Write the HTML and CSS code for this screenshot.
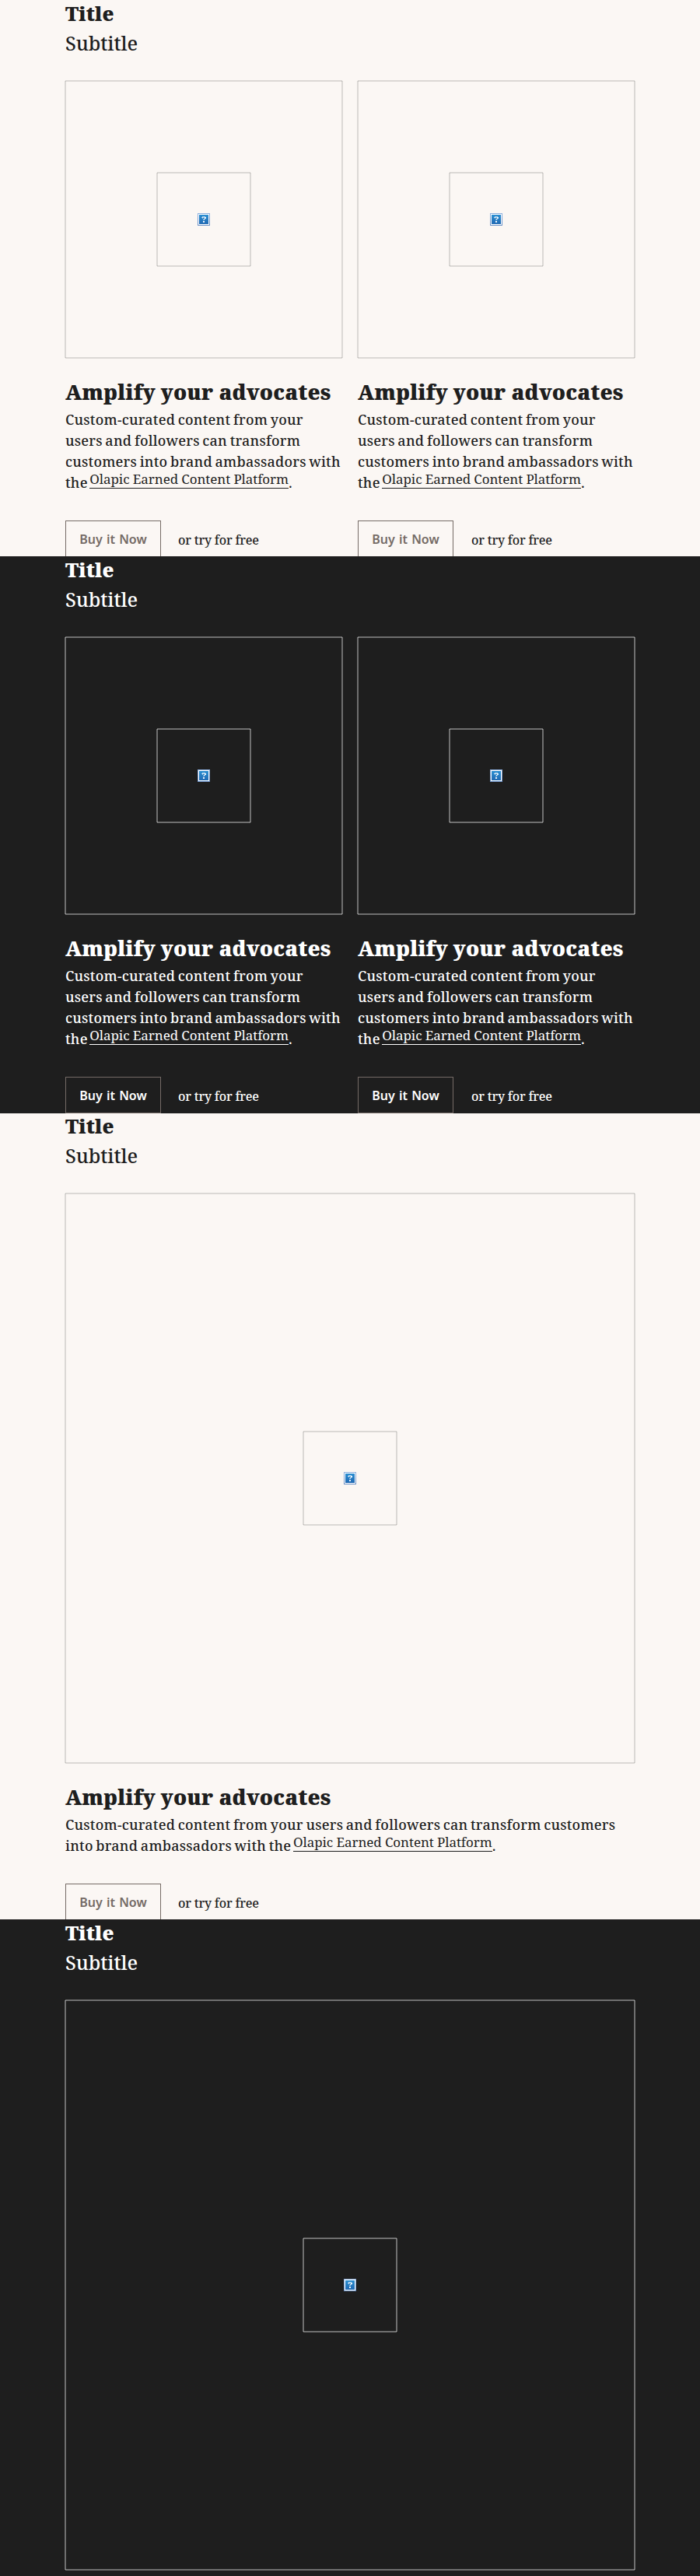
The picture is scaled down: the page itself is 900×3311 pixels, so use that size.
FILE: index.html
```html
<!DOCTYPE html>
<html lang="en">
<head>
<meta charset="utf-8">
<title>Cards</title>
<link rel="stylesheet" href="styles.css">
</head>
<body>
<svg class="defs" width="0" height="0" aria-hidden="true">
  <defs>
    <linearGradient id="edge" x1="0" y1="0" x2="0" y2="1"><stop offset="0" stop-color="#8fb1df"/><stop offset="1" stop-color="#668dc3"/></linearGradient>
    <linearGradient id="fill" x1="0" y1="0" x2="0" y2="1"><stop offset="0" stop-color="#2b8fd2"/><stop offset="1" stop-color="#2069b3"/></linearGradient>
    <symbol id="missing" viewBox="0 0 16 16">
      <rect width="16" height="16" fill="url(#edge)"/>
      <rect x="1" y="1" width="14" height="14" fill="#fff"/>
      <rect x="2" y="2" width="12" height="12" fill="url(#fill)"/>
      <g fill="#fff" stroke="none" shape-rendering="crispEdges">
        <path opacity=".6" d="M6 4h4v1H6zM5 5h1v1H5zM7 5h2v1H7zM6 6h1v1H6zM9 7h1v1H9zM7 8h2v1H7z"/>
        <path opacity=".9" d="M6 5h1v1H6zM9 5h2v2H9zM8 7h1v1H8zM7 10h2v2H7z"/>
      </g>
    </symbol>
  </defs>
</svg>

<section class="section light">
  <div class="container">
    <h2 class="title">Title</h2>
    <p class="subtitle">Subtitle</p>
    <div class="cards">
      <article class="card">
        <div class="media">
          <svg class="frame" viewBox="0 0 356 356"><path d="M0 0H356"/><path d="M0 356H356"/><path d="M0 0V356"/><path d="M356 0V356"/></svg>
          <div class="slot"><svg class="frame" viewBox="0 0 120 120"><path d="M0 0H120"/><path d="M0 120H120"/><path d="M0 0V120"/><path d="M120 0V120"/></svg><svg class="icon"><use href="#missing"/></svg></div>
        </div>
        <h3 class="heading">Amplify your advocates</h3>
        <p class="text">Custom-curated content from your users&nbsp;and followers can transform customers into brand ambassadors with the <a class="link">Olapic Earned Content Platform</a>.</p>
        <div class="actions"><a class="button">Buy it Now</a><span class="note">or try for free</span></div>
      </article>
      <article class="card">
        <div class="media">
          <svg class="frame" viewBox="0 0 356 356"><path d="M0 0H356"/><path d="M0 356H356"/><path d="M0 0V356"/><path d="M356 0V356"/></svg>
          <div class="slot"><svg class="frame" viewBox="0 0 120 120"><path d="M0 0H120"/><path d="M0 120H120"/><path d="M0 0V120"/><path d="M120 0V120"/></svg><svg class="icon"><use href="#missing"/></svg></div>
        </div>
        <h3 class="heading">Amplify your advocates</h3>
        <p class="text">Custom-curated content from your users&nbsp;and followers can transform customers into brand ambassadors with the <a class="link">Olapic Earned Content Platform</a>.</p>
        <div class="actions"><a class="button">Buy it Now</a><span class="note">or try for free</span></div>
      </article>
    </div>
  </div>
</section>

<section class="section dark">
  <div class="container">
    <h2 class="title">Title</h2>
    <p class="subtitle">Subtitle</p>
    <div class="cards">
      <article class="card">
        <div class="media">
          <svg class="frame" viewBox="0 0 356 356"><path d="M0 0H356"/><path d="M0 356H356"/><path d="M0 0V356"/><path d="M356 0V356"/></svg>
          <div class="slot"><svg class="frame" viewBox="0 0 120 120"><path d="M0 0H120"/><path d="M0 120H120"/><path d="M0 0V120"/><path d="M120 0V120"/></svg><svg class="icon"><use href="#missing"/></svg></div>
        </div>
        <h3 class="heading">Amplify your advocates</h3>
        <p class="text">Custom-curated content from your users&nbsp;and followers can transform customers into brand ambassadors with the <a class="link">Olapic Earned Content Platform</a>.</p>
        <div class="actions"><a class="button">Buy it Now</a><span class="note">or try for free</span></div>
      </article>
      <article class="card">
        <div class="media">
          <svg class="frame" viewBox="0 0 356 356"><path d="M0 0H356"/><path d="M0 356H356"/><path d="M0 0V356"/><path d="M356 0V356"/></svg>
          <div class="slot"><svg class="frame" viewBox="0 0 120 120"><path d="M0 0H120"/><path d="M0 120H120"/><path d="M0 0V120"/><path d="M120 0V120"/></svg><svg class="icon"><use href="#missing"/></svg></div>
        </div>
        <h3 class="heading">Amplify your advocates</h3>
        <p class="text">Custom-curated content from your users&nbsp;and followers can transform customers into brand ambassadors with the <a class="link">Olapic Earned Content Platform</a>.</p>
        <div class="actions"><a class="button">Buy it Now</a><span class="note">or try for free</span></div>
      </article>
    </div>
  </div>
</section>

<section class="section light wide">
  <div class="container">
    <h2 class="title">Title</h2>
    <p class="subtitle">Subtitle</p>
    <div class="cards">
      <article class="card">
        <div class="media">
          <svg class="frame" viewBox="0 0 732 732"><path d="M0 0H732"/><path d="M0 732H732"/><path d="M0 0V732"/><path d="M732 0V732"/></svg>
          <div class="slot"><svg class="frame" viewBox="0 0 120 120"><path d="M0 0H120"/><path d="M0 120H120"/><path d="M0 0V120"/><path d="M120 0V120"/></svg><svg class="icon"><use href="#missing"/></svg></div>
        </div>
        <h3 class="heading">Amplify your advocates</h3>
        <p class="text">Custom-curated content from your users and followers can transform customers into brand ambassadors with the <a class="link">Olapic Earned Content Platform</a>.</p>
        <div class="actions"><a class="button">Buy it Now</a><span class="note">or try for free</span></div>
      </article>
    </div>
  </div>
</section>

<section class="section dark last">
  <div class="container">
    <h2 class="title">Title</h2>
    <p class="subtitle">Subtitle</p>
    <div class="cards">
      <article class="card">
        <div class="media">
          <svg class="frame" viewBox="0 0 732 732"><path d="M0 0H732"/><path d="M0 732H732"/><path d="M0 0V732"/><path d="M732 0V732"/></svg>
          <div class="slot"><svg class="frame" viewBox="0 0 120 120"><path d="M0 0H120"/><path d="M0 120H120"/><path d="M0 0V120"/><path d="M120 0V120"/></svg><svg class="icon"><use href="#missing"/></svg></div>
        </div>
      </article>
    </div>
  </div>
</section>
</body>
</html>
```
FILE: styles.css
```css
* { box-sizing: border-box; }

body {
  margin: 0;
  font-family: "Noto Serif", "DejaVu Serif", serif;
  font-weight: 500;
}

h2, h3, p { margin: 0; }

.defs { display: block; height: 0; }

.section { overflow: hidden; height: 715px; }
.light { background: #fbf7f4; color: #1e1e1e; --line: rgba(0, 0, 0, .125); --button: #756b66; }
.dark { background: #1e1e1e; color: #fff; height: 716px; position: relative; z-index: 1; --line: rgba(255, 255, 255, .36); --button: #fff; }
.wide { height: 1037px; margin-top: -1px; }
.last { height: 844px; }

.container { width: 732px; margin: 0 auto; }

.title {
  padding-bottom: 2px;
  font-weight: 900;
  font-size: 25px;
  line-height: 34px;
  letter-spacing: .1px;
}

.subtitle {
  font-size: 25px;
  line-height: 38px;
  letter-spacing: -.1px;
}

.cards { display: flex; gap: 20px; margin-top: 30px; }
.card { flex: 1; min-width: 0; }

.media { display: grid; aspect-ratio: 1; place-items: center; }
.media > * { grid-area: 1 / 1; }
.slot { display: grid; width: 120px; height: 120px; place-items: center; }
.slot > * { grid-area: 1 / 1; }
.frame { display: block; width: 100%; height: 100%; overflow: visible; stroke: var(--line); stroke-width: 2; }
.icon { width: 16px; height: 16px; }

.heading {
  margin-top: 26px;
  font-weight: 900;
  font-size: 27px;
  line-height: 36px;
  letter-spacing: .12px;
  white-space: nowrap;
}

.text {
  margin-top: 4px;
  font-size: 18px;
  line-height: 27px;
  letter-spacing: .22px;
  word-spacing: -1.3px;
}

.link {
  margin-left: -1px;
  border-bottom: 1px solid currentColor;
  font-size: 17px;
  font-weight: 400;
  line-height: 0;
  letter-spacing: -.08px;
  word-spacing: 0;
  vertical-align: 5px;
}

.actions { display: flex; margin-top: 35px; }

.button {
  width: 123px;
  height: 47px;
  border: 1px solid #756b66;
  color: var(--button);
  font: 600 16px/46px "Noto Sans", sans-serif;
  text-align: center;
  word-spacing: 1px;
}

.note {
  margin-left: 22px;
  padding-top: 2px;
  font-size: 16px;
  line-height: 46px;
  letter-spacing: -.2px;
}

.card + .card .note { margin-left: 23px; }
```
